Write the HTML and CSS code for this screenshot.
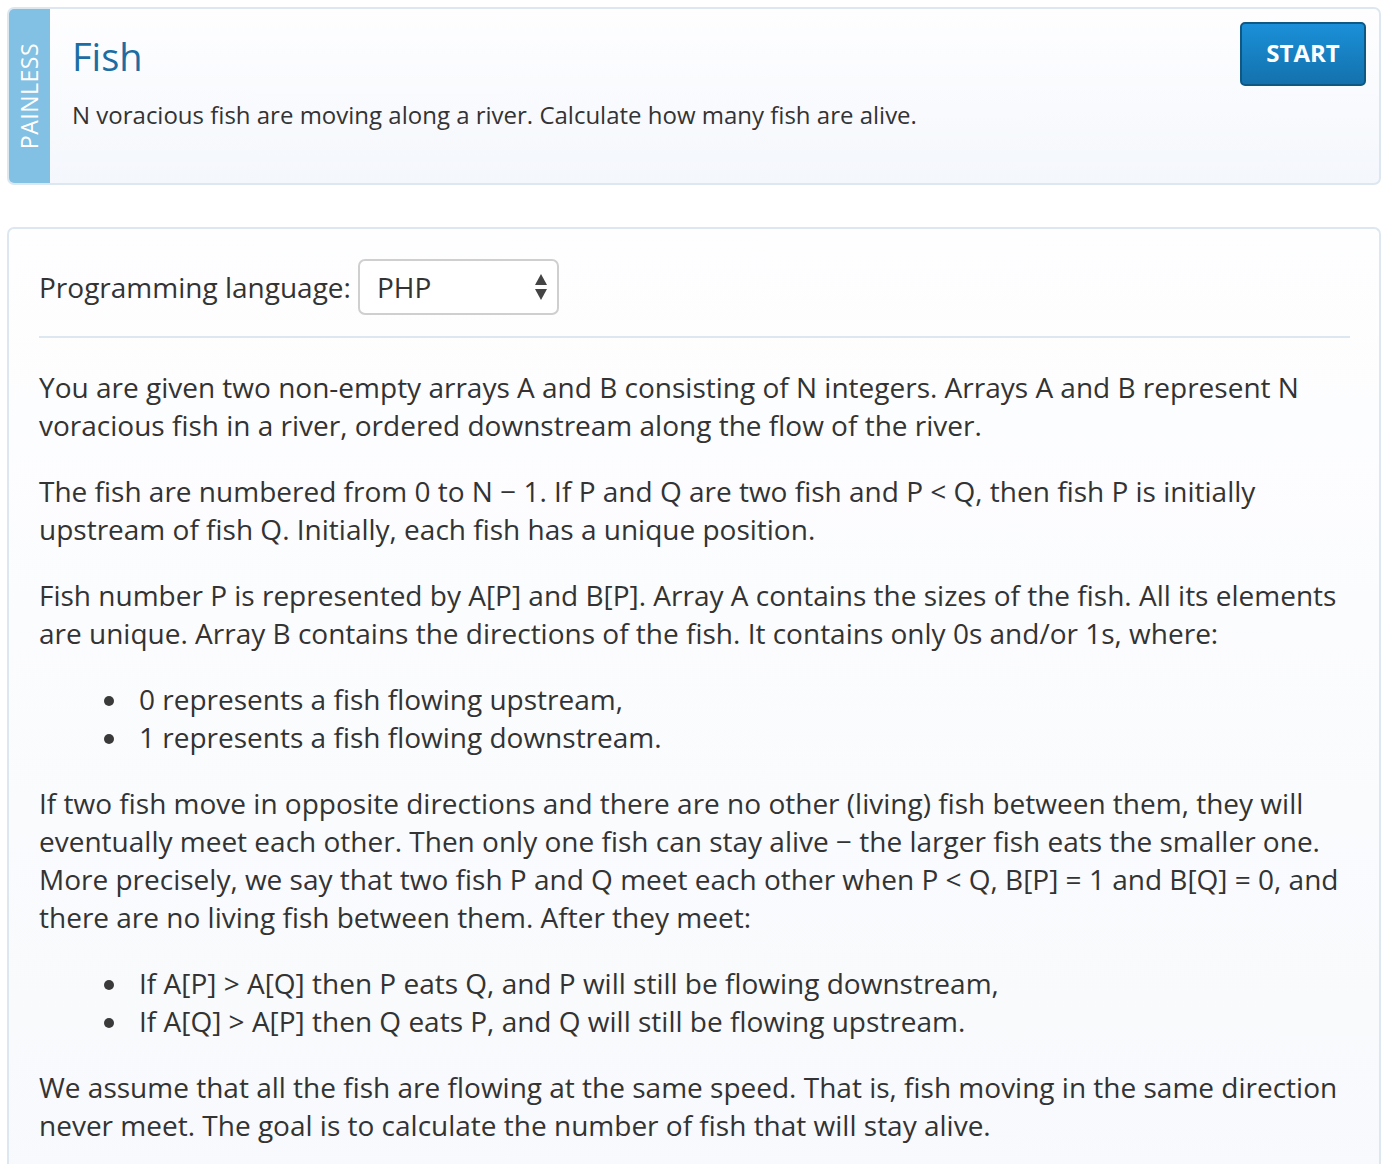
FILE: index.html
```html
<!DOCTYPE html>
<html lang="en">
<head>
<meta charset="utf-8">
<title>Fish</title>
<link rel="stylesheet" href="styles.css">
</head>
<body>
<div class="page">
  <section class="task-card">
    <div class="stripe"><span class="stripe-label">PAINLESS</span></div>
    <div class="task-info">
      <h1 class="task-title">Fish</h1>
      <p class="task-summary">N voracious fish are moving along a river. Calculate how many fish are alive.</p>
    </div>
    <button class="start-btn" type="button">START</button>
  </section>

  <section class="desc-card">
    <div class="lang-row">
      <span class="lang-label">Programming language:</span>
      <div class="select-box">
        <span class="select-value">PHP</span>
        <svg class="select-arrows" width="14" height="28" viewBox="0 0 14 28"><path d="M7 1 L13 12 L1 12 Z" fill="#444"/><path d="M1 16 L13 16 L7 27 Z" fill="#444"/></svg>
      </div>
    </div>
    <hr class="divider">
    <div class="desc">
      <p>You are given two non-empty arrays A and B consisting of N integers. Arrays A and B represent N voracious fish in a river, ordered downstream along the flow of the river.</p>
      <p>The fish are numbered from 0 to N − 1. If P and Q are two fish and P &lt; Q, then fish P is initially upstream of fish Q. Initially, each fish has a unique position.</p>
      <p>Fish number P is represented by A[P] and B[P]. Array A contains the sizes of the fish. All its elements are unique. Array B contains the directions of the fish. It contains only 0s and/or 1s, where:</p>
      <ul>
        <li>0 represents a fish flowing upstream,</li>
        <li>1 represents a fish flowing downstream.</li>
      </ul>
      <p>If two fish move in opposite directions and there are no other (living) fish between them, they will eventually meet each other. Then only one fish can stay alive − the larger fish eats the smaller one. More precisely, we say that two fish P and Q meet each other when P &lt; Q, B[P] = 1 and B[Q] = 0, and there are no living fish between them. After they meet:</p>
      <ul>
        <li>If A[P] &gt; A[Q] then P eats Q, and P will still be flowing downstream,</li>
        <li>If A[Q] &gt; A[P] then Q eats P, and Q will still be flowing upstream.</li>
      </ul>
      <p>We assume that all the fish are flowing at the same speed. That is, fish moving in the same direction never meet. The goal is to calculate the number of fish that will stay alive.</p>
    </div>
  </section>
</div>
</body>
</html>
```

FILE: styles.css
```css
* { box-sizing: border-box; }
html, body { margin: 0; padding: 0; background: #fff; }
body {
  font-family: "Open Sans", "Noto Sans", sans-serif;
  color: #333;
}
.page {
  padding: 7px 9px 0 7px;
  display: flex;
  flex-direction: column;
  gap: 42px;
}
.task-card {
  display: flex;
  height: 178px;
  border: 2px solid #dde7f0;
  border-radius: 7px;
  background: linear-gradient(#fefeff, #f4f7fc);
  overflow: hidden;
}
.stripe {
  width: 41px;
  flex: none;
  background: #82c1e3;
  display: flex;
  align-items: center;
  justify-content: center;
}
.stripe-label {
  writing-mode: vertical-rl;
  transform: rotate(180deg);
  color: #fff;
  font-size: 23px;
  letter-spacing: 0.5px;
  line-height: 1;
}
.task-info {
  flex: 1;
  padding: 25px 0 0 22px;
}
.task-title {
  margin: 0;
  font-size: 38px;
  font-weight: 400;
  line-height: 44px;
  color: #1b6da3;
}
.task-summary {
  margin: 22px 0 0;
  font-size: 24px;
  line-height: 30px;
  color: #333;
}
.start-btn {
  align-self: flex-start;
  margin: 13px 13px 0 0;
  width: 126px;
  height: 64px;
  border: 2px solid #0e5884;
  border-radius: 5px;
  background: linear-gradient(#1a90d8, #1471ad);
  color: #fff;
  font-family: "Open Sans", sans-serif;
  font-weight: 700;
  font-size: 24px;
  padding: 0 0 4px;
  cursor: pointer;
}
.desc-card {
  border: 2px solid #dde7f0;
  border-bottom: none;
  border-radius: 7px 7px 0 0;
  background: linear-gradient(#fefeff, #f7f9fc);
  padding: 30px 29px 40px 30px;
  min-height: 950px;
}
.lang-row {
  display: flex;
  align-items: center;
  gap: 7px;
}
.lang-label {
  font-size: 28px;
  color: #333;
}
.select-box {
  width: 201px;
  height: 56px;
  border: 2px solid #cfcfcf;
  border-radius: 7px;
  background: #fff;
  display: flex;
  align-items: center;
  justify-content: space-between;
  padding: 0 9px 0 17px;
}
.select-value {
  font-size: 28px;
  color: #333;
}
.divider {
  border: none;
  border-top: 2px solid #dde7f0;
  margin: 21px 0 30px;
}
.desc {
  font-size: 28px;
  line-height: 38px;
  color: #333;
}
.desc p {
  margin: 0 0 28px;
}
.desc ul {
  margin: 0 0 28px;
  padding-left: 65px;
  list-style: none;
}
.desc li {
  display: flex;
  align-items: flex-start;
}
.desc li::before {
  content: "";
  flex: none;
  width: 10px;
  height: 10px;
  border-radius: 50%;
  background: #3a3a3a;
  margin: 16px 25px 0 0;
}
```
